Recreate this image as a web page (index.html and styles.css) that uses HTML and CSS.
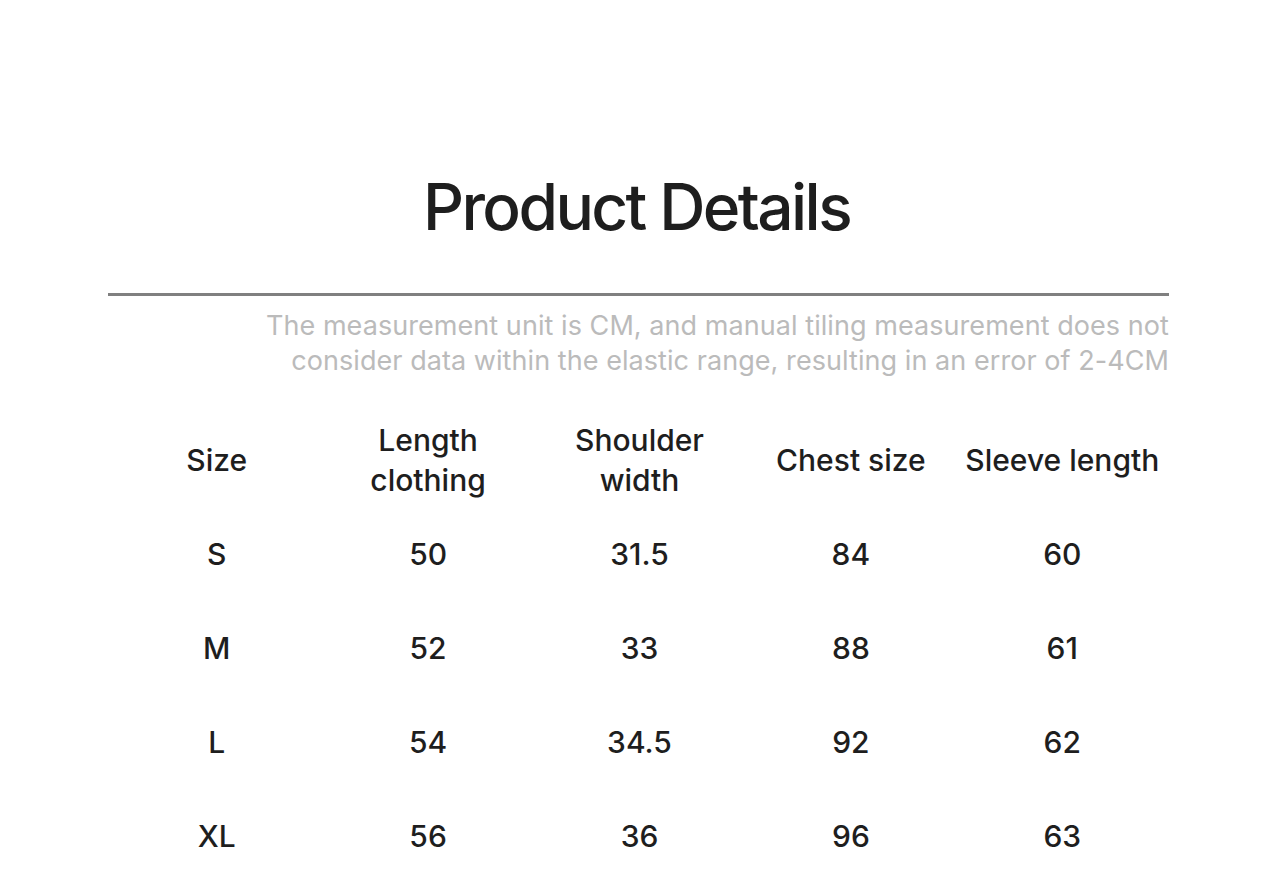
FILE: index.html
```html
<!DOCTYPE html>
<html lang="en">
<head>
<meta charset="utf-8">
<title>Product Details</title>
<link rel="stylesheet" href="styles.css">
</head>
<body>
<main class="page">
  <h1 class="title">Product Details</h1>
  <hr class="rule">
  <p class="note">The measurement unit is CM, and manual tiling measurement does not<br>consider data within the elastic range, resulting in an error of 2-4CM</p>
  <div class="table">
    <div class="cell head">Size</div>
    <div class="cell head">Length<br>clothing</div>
    <div class="cell head">Shoulder<br>width</div>
    <div class="cell head">Chest size</div>
    <div class="cell head">Sleeve length</div>

    <div class="cell">S</div><div class="cell">50</div><div class="cell">31.5</div><div class="cell">84</div><div class="cell">60</div>
    <div class="cell">M</div><div class="cell">52</div><div class="cell">33</div><div class="cell">88</div><div class="cell">61</div>
    <div class="cell">L</div><div class="cell">54</div><div class="cell">34.5</div><div class="cell">92</div><div class="cell">62</div>
    <div class="cell">XL</div><div class="cell">56</div><div class="cell">36</div><div class="cell">96</div><div class="cell">63</div>
  </div>
</main>
</body>
</html>
```

FILE: styles.css
```css
html, body {
  margin: 0;
  padding: 0;
  background: #ffffff;
}

body {
  font-family: "Inter", "Liberation Sans", sans-serif;
  color: #1e1e1e;
}

.page {
  width: 1061px;
  margin: 0 auto 0 108px;
  padding-top: 167px;
  display: flex;
  flex-direction: column;
}

.title {
  margin: 0;
  font-size: 64px;
  line-height: 80px;
  font-weight: 500;
  letter-spacing: -2.6px;
  text-align: center;
  color: #1e1e1e;
  padding-right: 4px;
}

.rule {
  margin: 46px 0 0 0;
  border: none;
  height: 3px;
  background: #808080;
}

.note {
  margin: 12px 0 0 0;
  font-size: 27px;
  line-height: 35px;
  letter-spacing: 0.06px;
  text-align: right;
  color: #bbbbbb;
}

.table {
  margin: 35px 0 0 3px;
  width: 1057px;
  display: grid;
  grid-template-columns: repeat(5, 1fr);
  grid-auto-rows: 94px;
}

.cell {
  display: flex;
  align-items: center;
  justify-content: center;
  text-align: center;
  font-size: 30px;
  line-height: 40px;
  font-weight: 500;
  letter-spacing: 0;
}
```
